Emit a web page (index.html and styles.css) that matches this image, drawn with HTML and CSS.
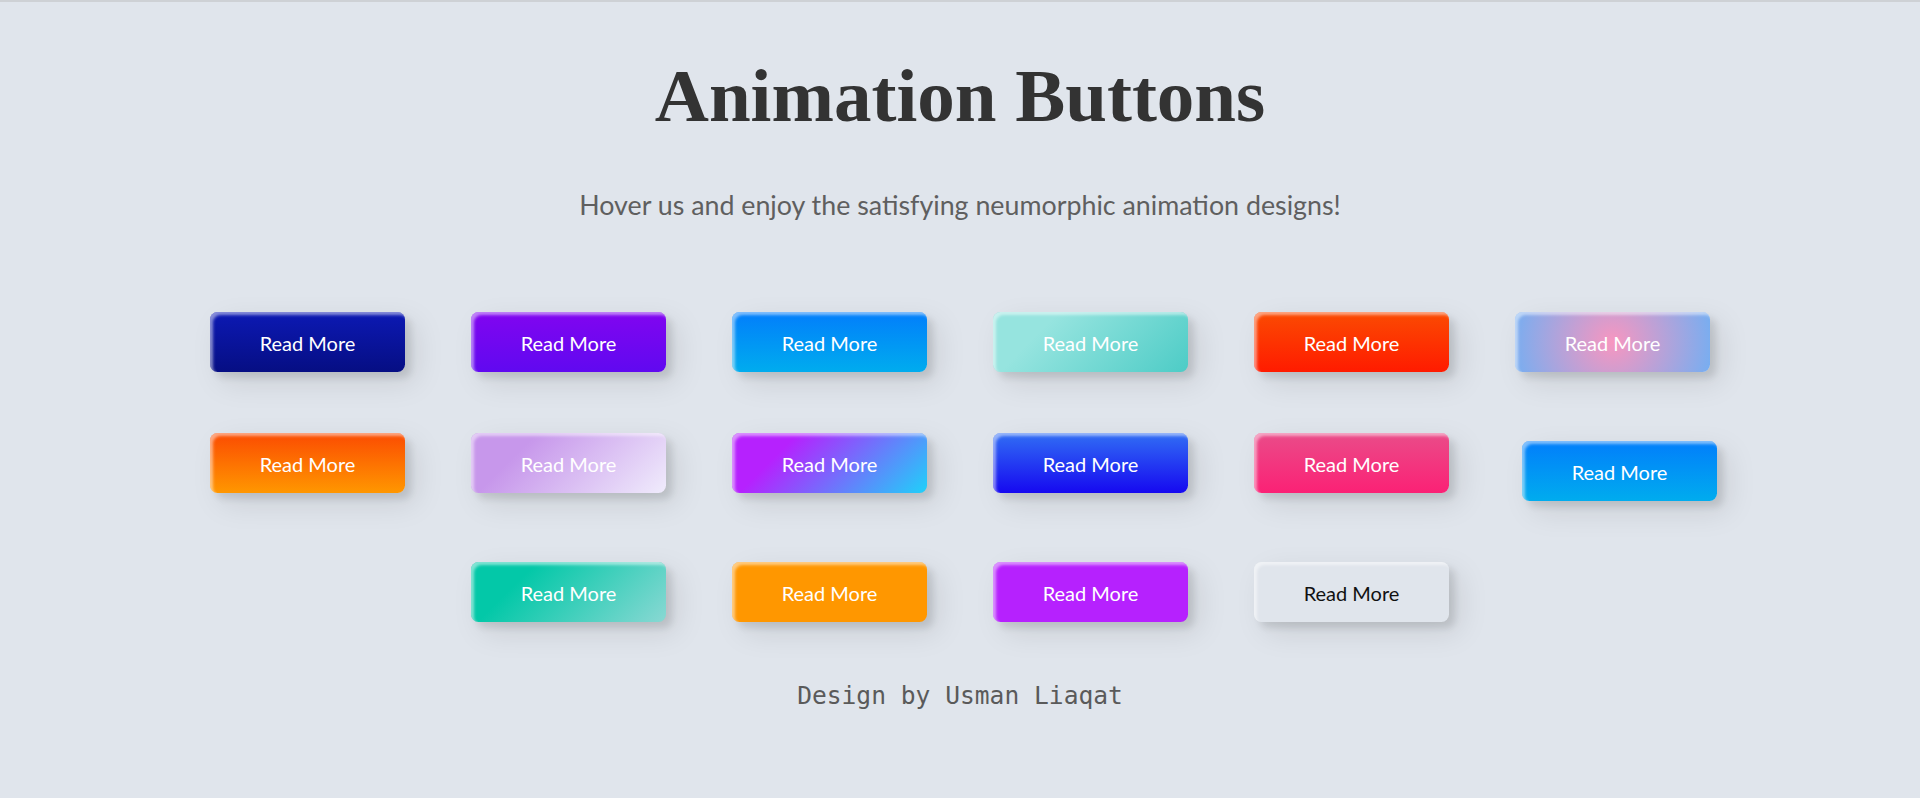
FILE: index.html
```html
<!DOCTYPE html>
<html lang="en">
<head>
<meta charset="utf-8">
<title>Animation Buttons</title>
<link rel="stylesheet" href="styles.css">
</head>
<body>
<main class="page">
  <h1 class="title">Animation Buttons</h1>
  <p class="subtitle">Hover us and enjoy the satisfying neumorphic animation designs!</p>
  <div class="buttons">
    <button class="custom-btn btn-1">Read More</button>
    <button class="custom-btn btn-2">Read More</button>
    <button class="custom-btn btn-3">Read More</button>
    <button class="custom-btn btn-4">Read More</button>
    <button class="custom-btn btn-5">Read More</button>
    <button class="custom-btn btn-6">Read More</button>
    <button class="custom-btn btn-7">Read More</button>
    <button class="custom-btn btn-8">Read More</button>
    <button class="custom-btn btn-9">Read More</button>
    <button class="custom-btn btn-10">Read More</button>
    <button class="custom-btn btn-11">Read More</button>
    <button class="custom-btn btn-12">Read More</button>
    <button class="custom-btn btn-13">Read More</button>
    <button class="custom-btn btn-14">Read More</button>
    <button class="custom-btn btn-15">Read More</button>
    <button class="custom-btn btn-16">Read More</button>
  </div>
  <p class="credit">Design by Usman Liaqat</p>
</main>
</body>
</html>
```
FILE: styles.css
```css
html, body {
  margin: 0;
  padding: 0;
}

body {
  background: #e0e5ec;
  border-top: 2px solid #ced1d5;
  min-height: 796px;
}

.page {
  text-align: center;
  padding-top: 51px;
}

.title {
  margin: 0;
  font-family: "Liberation Serif", "Times New Roman", serif;
  font-weight: bold;
  font-size: 75px;
  line-height: 86px;
  color: #333333;
}

.subtitle {
  margin: 50px 0 0;
  font-family: Lato, "Open Sans", sans-serif;
  font-size: 26.8px;
  line-height: 32px;
  color: #5f5f5f;
}

.buttons {
  width: 1500px;
  margin: 91px auto 0;
  display: flex;
  flex-wrap: wrap;
  justify-content: center;
  align-items: flex-start;
  column-gap: 66px;
  row-gap: 61px;
}

.custom-btn {
  width: 195px;
  height: 60px;
  padding: 0;
  border: none;
  border-radius: 7.5px;
  color: #fff;
  font-family: Lato, "Open Sans", sans-serif;
  font-weight: 400;
  font-size: 20px;
  line-height: 63px;
  background: transparent;
  cursor: pointer;
  outline: none;
  box-shadow: inset 3px 3px 3px 0 rgba(255, 255, 255, .5),
    10.5px 10.5px 30px 0 rgba(0, 0, 0, .1),
    6px 6px 7.5px 0 rgba(0, 0, 0, .1);
}

.btn-1 {
  background: linear-gradient(0deg, rgb(6, 14, 131) 0%, rgb(12, 25, 180) 100%);
}

.btn-2 {
  background: linear-gradient(0deg, rgb(96, 9, 240) 0%, rgb(129, 5, 240) 100%);
}

.btn-3 {
  background: linear-gradient(0deg, rgb(0, 172, 238) 0%, rgb(2, 126, 251) 100%);
}

.btn-4 {
  background-color: #4dccc6;
  background-image: linear-gradient(315deg, #4dccc6 0%, #96e4df 74%);
}

.btn-5 {
  background: linear-gradient(0deg, rgb(255, 27, 0) 0%, rgb(251, 75, 2) 100%);
}

.btn-6 {
  background: radial-gradient(circle, rgb(247, 150, 192) 0%, rgb(118, 174, 241) 100%);
}

.btn-7 {
  background: linear-gradient(0deg, rgb(255, 151, 0) 0%, rgb(251, 75, 2) 100%);
}

.btn-8 {
  background-color: #f0ecfc;
  background-image: linear-gradient(315deg, #f0ecfc 0%, #c797eb 74%);
}

.btn-9 {
  background-color: #1fd1f9;
  background-image: linear-gradient(315deg, #1fd1f9 0%, #b621fe 74%);
}

.btn-10 {
  background: linear-gradient(0deg, rgb(22, 9, 240) 0%, rgb(49, 110, 244) 100%);
}

.btn-11 {
  background: linear-gradient(0deg, rgb(251, 33, 117) 0%, rgb(234, 76, 137) 100%);
}

.btn-12 {
  background: linear-gradient(0deg, rgb(0, 172, 238) 0%, rgb(2, 126, 251) 100%);
  margin: 8px -7px 0 7px;
}

.btn-13 {
  background-color: #89d8d3;
  background-image: linear-gradient(315deg, #89d8d3 0%, #03c8a8 74%);
}

.btn-14 {
  background: rgb(255, 151, 0);
}

.btn-15 {
  background: #b621fe;
}

.btn-16 {
  background: transparent;
  color: #111;
}

.credit {
  margin: 59px 0 0;
  font-family: "DejaVu Sans Mono", "Liberation Mono", monospace;
  font-size: 24.6px;
  line-height: normal;
  color: #5a5a5a;
}
```
